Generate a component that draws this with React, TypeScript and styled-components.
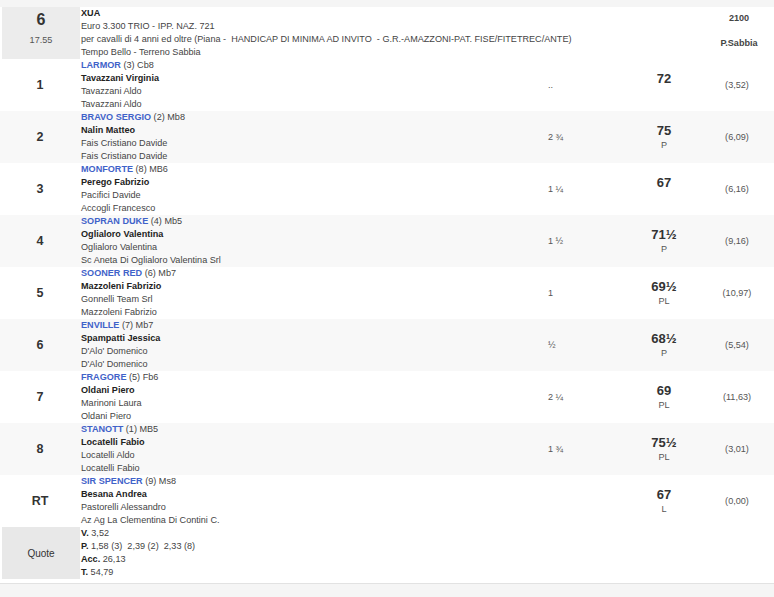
import styled, { createGlobalStyle } from "styled-components"

const GlobalStyle = createGlobalStyle`
  html, body {
    margin: 0;
    padding: 0;
    background: #f5f5f5;
    font-family: "Liberation Sans", Arial, sans-serif;
  }
  body {
    padding-top: 7px;
  }
`

type Runner = {
  num: string
  horse: string
  extra: string
  jockey: string
  trainer: string
  owner: string
  dist: string
  weight: string
  note: string
  odds: string
}

const runners: Runner[] = [
  { num: "1", horse: "LARMOR", extra: "(3) Cb8", jockey: "Tavazzani Virginia", trainer: "Tavazzani Aldo", owner: "Tavazzani Aldo", dist: "..", weight: "72", note: "", odds: "(3,52)" },
  { num: "2", horse: "BRAVO SERGIO", extra: "(2) Mb8", jockey: "Nalin Matteo", trainer: "Fais Cristiano Davide", owner: "Fais Cristiano Davide", dist: "2 ¾", weight: "75", note: "P", odds: "(6,09)" },
  { num: "3", horse: "MONFORTE", extra: "(8) MB6", jockey: "Perego Fabrizio", trainer: "Pacifici Davide", owner: "Accogli Francesco", dist: "1 ¼", weight: "67", note: "", odds: "(6,16)" },
  { num: "4", horse: "SOPRAN DUKE", extra: "(4) Mb5", jockey: "Oglialoro Valentina", trainer: "Oglialoro Valentina", owner: "Sc Aneta Di Oglialoro Valentina Srl", dist: "1 ½", weight: "71½", note: "P", odds: "(9,16)" },
  { num: "5", horse: "SOONER RED", extra: "(6) Mb7", jockey: "Mazzoleni Fabrizio", trainer: "Gonnelli Team Srl", owner: "Mazzoleni Fabrizio", dist: "1", weight: "69½", note: "PL", odds: "(10,97)" },
  { num: "6", horse: "ENVILLE", extra: "(7) Mb7", jockey: "Spampatti Jessica", trainer: "D'Alo' Domenico", owner: "D'Alo' Domenico", dist: "½", weight: "68½", note: "P", odds: "(5,54)" },
  { num: "7", horse: "FRAGORE", extra: "(5) Fb6", jockey: "Oldani Piero", trainer: "Marinoni Laura", owner: "Oldani Piero", dist: "2 ¼", weight: "69", note: "PL", odds: "(11,63)" },
  { num: "8", horse: "STANOTT", extra: "(1) MB5", jockey: "Locatelli Fabio", trainer: "Locatelli Aldo", owner: "Locatelli Fabio", dist: "1 ¾", weight: "75½", note: "PL", odds: "(3,01)" },
  { num: "RT", horse: "SIR SPENCER", extra: "(9) Ms8", jockey: "Besana Andrea", trainer: "Pastorelli Alessandro", owner: "Az Ag La Clementina Di Contini C.", dist: "", weight: "67", note: "L", odds: "(0,00)" },
]

const quotes = [
  { label: "V.", value: "3,52" },
  { label: "P.", value: "1,58 (3)  2,39 (2)  2,33 (8)" },
  { label: "Acc.", value: "26,13" },
  { label: "T.", value: "54,79" },
]

const App = () => {
  return (
    <>
      <GlobalStyle />
      <Board>
        <Row>
          <RaceBox>
            <RaceNum>6</RaceNum>
            <RaceTime>17.55</RaceTime>
          </RaceBox>
          <RaceInfo>
            <Line $bold>XUA</Line>
            <Line>Euro 3.300 TRIO - IPP. NAZ. 721</Line>
            <Line>per cavalli di 4 anni ed oltre (Piana -&nbsp; HANDICAP DI MINIMA AD INVITO&nbsp; - G.R.-AMAZZONI-PAT. FISE/FITETREC/ANTE)</Line>
            <Line>Tempo Bello - Terreno Sabbia</Line>
          </RaceInfo>
          <TrackBox>
            <span>2100</span>
            <span>P.Sabbia</span>
          </TrackBox>
        </Row>

        {runners.map((r, i) => (
          <Row key={r.num} $alt={i % 2 === 1}>
            <NumCell>{r.num}</NumCell>
            <Details>
              <Line>
                <Horse>{r.horse}</Horse> {r.extra}
              </Line>
              <Line $bold>{r.jockey}</Line>
              <Line>{r.trainer}</Line>
              <Line>{r.owner}</Line>
            </Details>
            <DistCell>{r.dist}</DistCell>
            <WeightCell>
              <Weight>{r.weight}</Weight>
              <WeightNote>{r.note || "\u00a0"}</WeightNote>
            </WeightCell>
            <OddsCell>{r.odds}</OddsCell>
          </Row>
        ))}

        <Row>
          <QuoteBox>Quote</QuoteBox>
          <Details>
            {quotes.map((q) => (
              <Line key={q.label}>
                <b>{q.label}</b> {q.value}
              </Line>
            ))}
          </Details>
        </Row>
      </Board>
    </>
  )
}
export default App

const Board = styled.div`
  background: #fff;
  padding-bottom: 4px;
  border-bottom: 1px solid #e2e2e2;
  font-size: 9.1px;
  color: #444;
`

const Row = styled.div<{ $alt?: boolean }>`
  display: grid;
  grid-template-columns: 80px 466px 78px 80px 1fr;
  height: 52px;
  background: ${(p) => (p.$alt ? "#f8f8f8" : "#fff")};
`

const RaceBox = styled.div`
  margin-left: 2px;
  background: #ececec;
  display: flex;
  flex-direction: column;
  align-items: center;
  padding-top: 3px;
`

const RaceNum = styled.div`
  font-size: 16px;
  font-weight: bold;
  color: #333;
  line-height: 19px;
`

const RaceTime = styled.div`
  margin-top: 6px;
  color: #555;
`

const RaceInfo = styled.div`
  grid-column: 2 / 5;
  padding-left: 1px;
`

const TrackBox = styled.div`
  display: flex;
  flex-direction: column;
  align-items: center;
  font-weight: bold;
  color: #444;
  padding-top: 6px;
  gap: 15px;
`

const Line = styled.div<{ $bold?: boolean }>`
  line-height: 13px;
  white-space: pre;
  font-weight: ${(p) => (p.$bold ? "bold" : "normal")};
  color: ${(p) => (p.$bold ? "#222" : "#444")};
  b {
    color: #222;
  }
`

const Horse = styled.span`
  color: #3f62c9;
  font-weight: bold;
`

const NumCell = styled.div`
  display: flex;
  align-items: center;
  justify-content: center;
  font-size: 12.5px;
  font-weight: bold;
  color: #333;
`

const Details = styled.div`
  padding-left: 1px;
`

const DistCell = styled.div`
  display: flex;
  align-items: center;
  padding-left: 2px;
  color: #555;
`

const WeightCell = styled.div`
  display: flex;
  flex-direction: column;
  align-items: center;
  justify-content: center;
`

const Weight = styled.div`
  font-size: 13px;
  font-weight: bold;
  color: #333;
  line-height: 16px;
`

const WeightNote = styled.div`
  line-height: 13px;
  color: #555;
`

const OddsCell = styled.div`
  display: flex;
  align-items: center;
  justify-content: center;
  color: #555;
  padding-right: 4px;
`

const QuoteBox = styled.div`
  margin-left: 2px;
  background: #e8e8e8;
  display: flex;
  align-items: center;
  justify-content: center;
  color: #333;
  font-size: 10px;
`
